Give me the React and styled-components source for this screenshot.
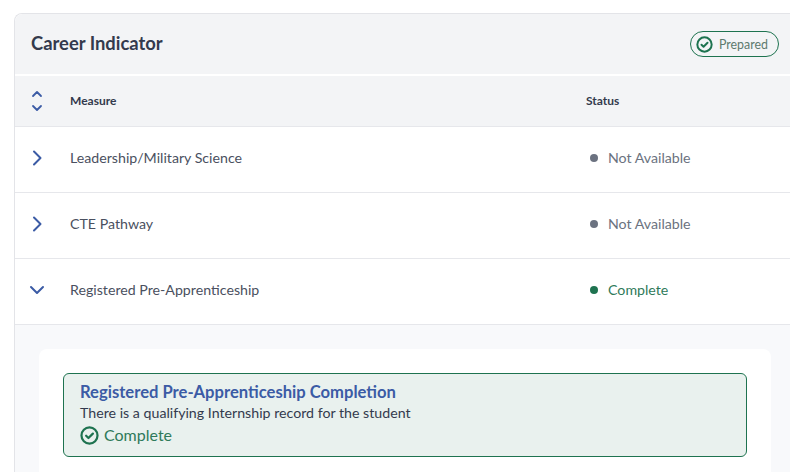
import React from 'react';
import styled, { createGlobalStyle } from 'styled-components';

const GlobalStyle = createGlobalStyle`
  html, body {
    margin: 0;
    padding: 0;
    background: #fff;
    overflow: hidden;
  }
  body {
    font-family: "Lato", "Open Sans", sans-serif;
  }
`;

const Page = styled.div`
  width: 790px;
  height: 472px;
  overflow: hidden;
  padding: 13px 0 0 14px;
  box-sizing: border-box;
`;

const Card = styled.section`
  width: 790px;
  border: 1px solid #e3e4e8;
  border-right: none;
  border-bottom: none;
  border-radius: 8px 0 0 0;
  box-sizing: border-box;
`;

const CardHeader = styled.header`
  height: 62px;
  box-sizing: border-box;
  padding: 0 0 2px 16px;
  display: flex;
  align-items: center;
  background: #f3f4f6;
  border-radius: 8px 0 0 0;
  border-bottom: 2px solid #fff;
`;

const Title = styled.h2`
  margin: 0 auto 0 0;
  font-size: 18.4px;
  font-weight: 700;
  color: #333a4d;
`;

const Badge = styled.div`
  width: 89px;
  height: 26px;
  box-sizing: border-box;
  border: 1px solid #1e7350;
  border-radius: 13px;
  display: flex;
  align-items: center;
  gap: 6px;
  padding-left: 5px;
  margin: 2px 25px 0 0;
  font-size: 12.4px;
  color: #5d7a6e;
`;

const Row = styled.div`
  height: ${(p) => p.$height}px;
  display: grid;
  grid-template-columns: 55px 516px 1fr;
  align-items: center;
  box-sizing: border-box;
  padding-bottom: ${(p) => p.$lift}px;
  border-bottom: 1px solid #e6e7eb;
  background: ${(p) => p.$bg || '#fff'};
`;

const IconCell = styled.div`
  display: flex;
  justify-content: center;
  color: #3b5ba5;
  width: 44px;
  margin-top: ${(p) => p.$nudge || 0}px;
`;

const HeaderLabel = styled.span`
  font-size: 12px;
  font-weight: 700;
  color: #333a4d;
`;

const Measure = styled.span`
  font-size: 14.2px;
  color: #4a5060;
`;

const Status = styled.div`
  display: flex;
  align-items: center;
  gap: 10px;
  padding-left: 4px;
  font-size: 14.2px;
  color: ${(p) => (p.$done ? '#2f7a5a' : '#6b7280')};
`;

const Dot = styled.span`
  width: 8px;
  height: 8px;
  border-radius: 50%;
  background: ${(p) => (p.$done ? '#1e7350' : '#6b7280')};
`;

const Detail = styled.div`
  background: #f8f9fb;
  padding: 24px 19px 0 24px;
  height: 150px;
  box-sizing: border-box;
`;

const DetailCard = styled.div`
  width: 732px;
  height: 130px;
  box-sizing: border-box;
  background: #fff;
  border-radius: 8px;
  padding: 24px;
`;

const Alert = styled.div`
  height: 84px;
  box-sizing: border-box;
  background: #e9f1ee;
  border: 1px solid #1e7350;
  border-radius: 6px;
  padding: 7px 16px;
  display: flex;
  flex-direction: column;
`;

const AlertTitle = styled.div`
  font-size: 16.6px;
  line-height: 22px;
  font-weight: 700;
  color: #3b5ba5;
`;

const AlertText = styled.div`
  font-size: 14.2px;
  line-height: 20px;
  color: #333a4d;
`;

const AlertStatus = styled.div`
  display: flex;
  align-items: center;
  gap: 5px;
  font-size: 16px;
  line-height: 24px;
  color: #2f7a5a;
`;

const CheckCircle = ({ size }) => (
  <svg width={size} height={size} viewBox="0 0 18 18" fill="none" stroke="#1e7350">
    <circle cx="9" cy="9" r="7.6" strokeWidth="2.1" />
    <path d="M5.8 9.2l2.2 2.2 4.2-4.2" strokeWidth="2.1" strokeLinecap="round" strokeLinejoin="round" />
  </svg>
);

const Chevron = ({ d }) => (
  <svg width="16" height="16" viewBox="0 0 16 16" fill="none" stroke="currentColor" strokeWidth="2" strokeLinecap="round" strokeLinejoin="round">
    <path d={d} />
  </svg>
);

const SortIcon = () => (
  <svg width="12" height="22" viewBox="0 0 12 22" fill="none" stroke="currentColor" strokeWidth="1.8" strokeLinecap="round" strokeLinejoin="round">
    <path d="M2 6l4-4 4 4" />
    <path d="M2 16l4 4 4-4" />
  </svg>
);

const RIGHT = 'M5 1.5L11.5 8 5 14.5';
const DOWN = 'M2 5l6 6 6-6';

const rows = [
  { name: 'Leadership/Military Science', status: 'Not Available', icon: RIGHT },
  { name: 'CTE Pathway', status: 'Not Available', icon: RIGHT },
  { name: 'Registered Pre-Apprenticeship', status: 'Complete', icon: DOWN, done: true },
];

export default function App() {
  return (
    <Page>
      <GlobalStyle />
      <Card>
        <CardHeader>
          <Title>Career Indicator</Title>
          <Badge>
            <CheckCircle size={17} />
            Prepared
          </Badge>
        </CardHeader>
        <Row $height={51} $lift={2} $bg="#f3f4f6">
          <IconCell $nudge={2}><SortIcon /></IconCell>
          <HeaderLabel>Measure</HeaderLabel>
          <HeaderLabel>Status</HeaderLabel>
        </Row>
        {rows.map((row) => (
          <Row key={row.name} $height={66} $lift={4}>
            <IconCell><Chevron d={row.icon} /></IconCell>
            <Measure>{row.name}</Measure>
            <Status $done={row.done}>
              <Dot $done={row.done} />
              {row.status}
            </Status>
          </Row>
        ))}
        <Detail>
          <DetailCard>
            <Alert>
              <AlertTitle>Registered Pre-Apprenticeship Completion</AlertTitle>
              <AlertText>There is a qualifying Internship record for the student</AlertText>
              <AlertStatus>
                <CheckCircle size={19} />
                Complete
              </AlertStatus>
            </Alert>
          </DetailCard>
        </Detail>
      </Card>
    </Page>
  );
}
